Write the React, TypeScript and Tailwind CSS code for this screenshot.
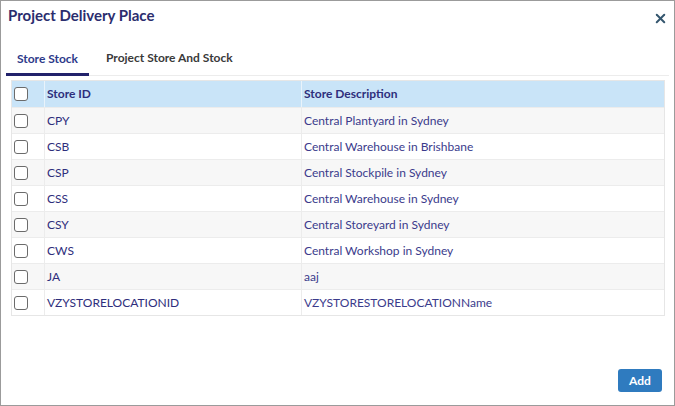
import { X } from 'lucide-react';

const stores = [
  { id: 'CPY', desc: 'Central Plantyard in Sydney' },
  { id: 'CSB', desc: 'Central Warehouse in Brishbane' },
  { id: 'CSP', desc: 'Central Stockpile in Sydney' },
  { id: 'CSS', desc: 'Central Warehouse in Sydney' },
  { id: 'CSY', desc: 'Central Storeyard in Sydney' },
  { id: 'CWS', desc: 'Central Workshop in Sydney' },
  { id: 'JA', desc: 'aaj' },
  { id: 'VZYSTORELOCATIONID', desc: 'VZYSTORESTORELOCATIONName' },
];

function Box() {
  return <span className="block w-[14px] h-[14px] rounded-[3px] border border-[#6b6b6b] bg-white" />;
}

export default function App() {
  return (
    <div
      className="w-[675px] h-[406px] border border-[#9b9b9b] bg-white flex flex-col text-[#2e2e7c]"
      style={{ fontFamily: 'Lato, "Noto Sans", sans-serif' }}
    >
      <div className="flex items-center justify-between pl-[7px] pr-[6px] h-[30px]">
        <h1 className="text-[15px] font-bold text-[#2b2d6e] leading-none -mt-[1px]">Project Delivery Place</h1>
        <button className="text-[#34566e] mt-[5px]">
          <X size={15} strokeWidth={3.2} />
        </button>
      </div>

      <div className="mx-[5px] flex border-b border-[#ececec] h-[45px] items-end">
        <div className="w-[83px] h-[26px] -mb-[1px] border-b-[3px] border-[#22226b] text-[12px] font-bold text-[#2e3a8a] flex justify-center">
          Store Stock
        </div>
        <div className="ml-[17px] h-[26px] text-[12px] font-bold text-[#3a3a3a]">
          Project Store And Stock
        </div>
      </div>

      <div className="mt-[4px] mx-[10px] mr-[9px] border border-[#e6e6e6]">
        <div className="flex h-[26px] bg-[#c9e4f8] text-[12px] font-bold text-[#2e2e7c] items-stretch">
          <div className="w-[33px] flex items-center pl-[2px] border-r border-[#e9f3fb]">
            <Box />
          </div>
          <div className="w-[257px] flex items-center pl-[2px] border-r border-[#e9f3fb]">Store ID</div>
          <div className="flex-1 flex items-center pl-[2px]">Store Description</div>
        </div>
        {stores.map((s, i) => (
          <div
            key={s.id}
            className={`flex h-[26px] text-[12px] border-t border-[#ececec] ${i % 2 === 0 ? 'bg-[#f7f7f7]' : 'bg-white'}`}
          >
            <div className="w-[33px] flex items-center pl-[2px] border-r border-[#ececec]">
              <Box />
            </div>
            <div className="w-[257px] flex items-center pl-[2px] border-r border-[#ececec]">{s.id}</div>
            <div className="flex-1 flex items-center pl-[2px] text-[#3b3b8c]">{s.desc}</div>
          </div>
        ))}
      </div>

      <div className="flex-1" />
      <div className="flex justify-end pr-[12px] pb-[13px]">
        <button className="w-[44px] h-[23px] rounded-[3px] bg-[#2f7bbf] text-white text-[12px] font-bold">Add</button>
      </div>
    </div>
  );
}
